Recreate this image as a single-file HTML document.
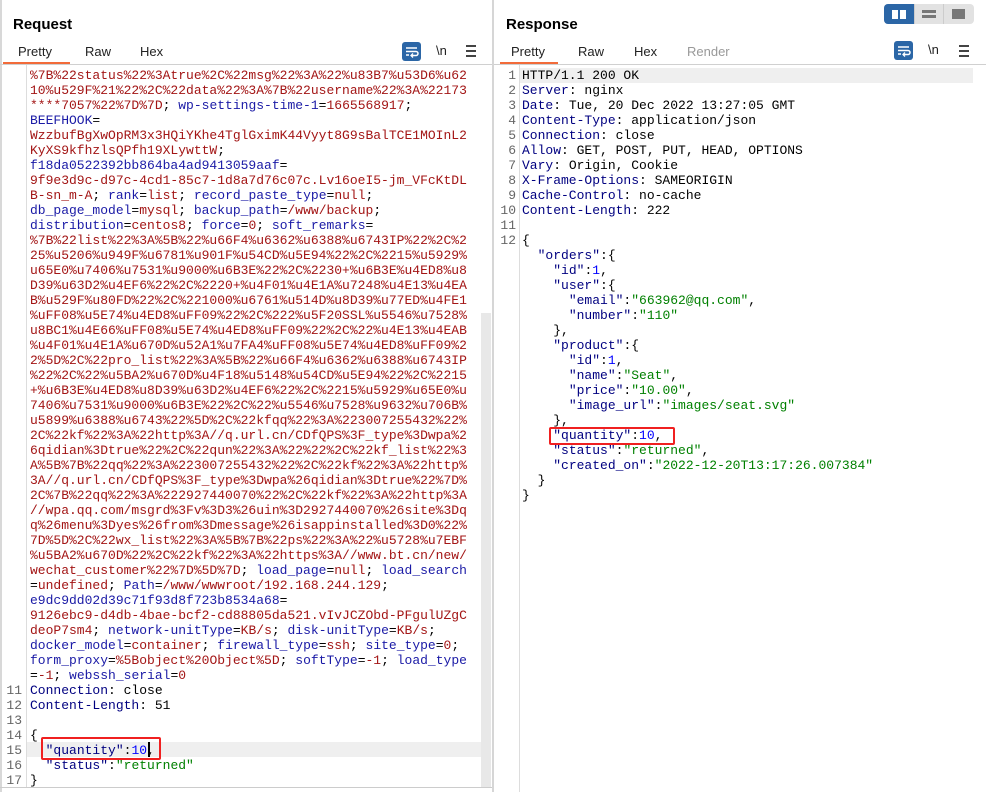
<!DOCTYPE html>
<html><head><meta charset="utf-8">
<style>
*{margin:0;padding:0;box-sizing:border-box}
html,body{width:986px;height:792px;overflow:hidden;background:#fff;font-family:"Liberation Sans",sans-serif}
.abs{position:absolute}
.title{font-weight:bold;font-size:15px;color:#000}
.tab{font-size:13px;color:#222;position:absolute;top:44px}
.code{position:absolute;font-family:"Liberation Mono",monospace;font-size:13px;line-height:15px;white-space:pre;color:#000}
.r{color:#a31515}
.b{color:#1a1aa6}
.n{color:#000080}
.k{color:#000080}
.s{color:#008000}
.num{color:#0000ff}
.ln{position:absolute;font-family:"Liberation Mono",monospace;font-size:13px;line-height:15px;color:#666;text-align:right;white-space:pre}
.wrapbtn{position:absolute;width:19px;height:19px;background:#2b66a6;border-radius:3px}
.menu{position:absolute;width:10px;height:2px;background:#444}
</style></head><body>
<div class="abs" style="left:0;top:0;width:2px;height:792px;background:#d8d8d8"></div>
<div class="abs" style="left:492px;top:0;width:2px;height:792px;background:#d6d6d6"></div>

<!-- Request header -->
<div class="abs title" style="left:13px;top:16px">Request</div>
<div class="tab" style="left:18px">Pretty</div>
<div class="tab" style="left:85px">Raw</div>
<div class="tab" style="left:140px">Hex</div>
<div class="abs" style="left:3px;top:62px;width:67px;height:3px;background:#f26b3a"></div>
<div class="abs" style="left:0;top:64px;width:492px;height:1px;background:#d0d0d0"></div>
<div class="wrapbtn" style="left:402px;top:42px"><svg width="19" height="19"><path d="M4 6h11M4 9.5h10a2 2 0 0 1 0 4h-4M4 13h3" stroke="#fff" stroke-width="1.5" fill="none"/><path d="M11 11.5l-2 2 2 2" stroke="#fff" stroke-width="1.3" fill="none"/></svg></div>
<div class="abs" style="left:436px;top:43px;font-size:13px;color:#222">\n</div>
<div class="menu" style="left:466px;top:45px"></div><div class="menu" style="left:466px;top:50px"></div><div class="menu" style="left:466px;top:55px"></div>

<!-- Request gutter -->
<div class="abs" style="left:26px;top:65px;width:1px;height:722px;background:#ddd"></div>
<div class="abs" style="left:481px;top:313px;width:10px;height:474px;background:#e8e8e8"></div>
<div class="abs" style="left:27px;top:742px;width:454px;height:15px;background:#efefef"></div>
<div class="ln" style="left:2px;top:683px;width:20px">11
12
13
14
15
16
17</div>
<div class="code" style="left:30px;top:68px"><span class="r">%7B%22status%22%3Atrue%2C%22msg%22%3A%22%u83B7%u53D6%u62
10%u529F%21%22%2C%22data%22%3A%7B%22username%22%3A%22173
****7057%22%7D%7D</span>; <span class="b">wp-settings-time-1</span>=<span class="r">1665568917</span>;
<span class="b">BEEFHOOK</span>=
<span class="r">WzzbufBgXwOpRM3x3HQiYKhe4TglGximK44Vyyt8G9sBalTCE1MOInL2
KyXS9kfhzlsQPfh19XLywttW</span>;
<span class="b">f18da0522392bb864ba4ad9413059aaf</span>=
<span class="r">9f9e3d9c-d97c-4cd1-85c7-1d8a7d76c07c.Lv16oeI5-jm_VFcKtDL
B-sn_m-A</span>; <span class="b">rank</span>=<span class="r">list</span>; <span class="b">record_paste_type</span>=<span class="r">null</span>;
<span class="b">db_page_model</span>=<span class="r">mysql</span>; <span class="b">backup_path</span>=<span class="r">/www/backup</span>;
<span class="b">distribution</span>=<span class="r">centos8</span>; <span class="b">force</span>=<span class="r">0</span>; <span class="b">soft_remarks</span>=
<span class="r">%7B%22list%22%3A%5B%22%u66F4%u6362%u6388%u6743IP%22%2C%2
25%u5206%u949F%u6781%u901F%u54CD%u5E94%22%2C%2215%u5929%
u65E0%u7406%u7531%u9000%u6B3E%22%2C%2230+%u6B3E%u4ED8%u8
D39%u63D2%u4EF6%22%2C%2220+%u4F01%u4E1A%u7248%u4E13%u4EA
B%u529F%u80FD%22%2C%221000%u6761%u514D%u8D39%u77ED%u4FE1
%uFF08%u5E74%u4ED8%uFF09%22%2C%222%u5F20SSL%u5546%u7528%
u8BC1%u4E66%uFF08%u5E74%u4ED8%uFF09%22%2C%22%u4E13%u4EAB
%u4F01%u4E1A%u670D%u52A1%u7FA4%uFF08%u5E74%u4ED8%uFF09%2
2%5D%2C%22pro_list%22%3A%5B%22%u66F4%u6362%u6388%u6743IP
%22%2C%22%u5BA2%u670D%u4F18%u5148%u54CD%u5E94%22%2C%2215
+%u6B3E%u4ED8%u8D39%u63D2%u4EF6%22%2C%2215%u5929%u65E0%u
7406%u7531%u9000%u6B3E%22%2C%22%u5546%u7528%u9632%u706B%
u5899%u6388%u6743%22%5D%2C%22kfqq%22%3A%223007255432%22%
2C%22kf%22%3A%22http%3A//q.url.cn/CDfQPS%3F_type%3Dwpa%2
6qidian%3Dtrue%22%2C%22qun%22%3A%22%22%2C%22kf_list%22%3
A%5B%7B%22qq%22%3A%223007255432%22%2C%22kf%22%3A%22http%
3A//q.url.cn/CDfQPS%3F_type%3Dwpa%26qidian%3Dtrue%22%7D%
2C%7B%22qq%22%3A%222927440070%22%2C%22kf%22%3A%22http%3A
//wpa.qq.com/msgrd%3Fv%3D3%26uin%3D2927440070%26site%3Dq
q%26menu%3Dyes%26from%3Dmessage%26isappinstalled%3D0%22%
7D%5D%2C%22wx_list%22%3A%5B%7B%22ps%22%3A%22%u5728%u7EBF
%u5BA2%u670D%22%2C%22kf%22%3A%22https%3A//www.bt.cn/new/
wechat_customer%22%7D%5D%7D</span>; <span class="b">load_page</span>=<span class="r">null</span>; <span class="b">load_search</span>
=<span class="r">undefined</span>; <span class="b">Path</span>=<span class="r">/www/wwwroot/192.168.244.129</span>;
<span class="b">e9dc9dd02d39c71f93d8f723b8534a68</span>=
<span class="r">9126ebc9-d4db-4bae-bcf2-cd88805da521.vIvJCZObd-PFgulUZgC
deoP7sm4</span>; <span class="b">network-unitType</span>=<span class="r">KB/s</span>; <span class="b">disk-unitType</span>=<span class="r">KB/s</span>;
<span class="b">docker_model</span>=<span class="r">container</span>; <span class="b">firewall_type</span>=<span class="r">ssh</span>; <span class="b">site_type</span>=<span class="r">0</span>;
<span class="b">form_proxy</span>=<span class="r">%5Bobject%20Object%5D</span>; <span class="b">softType</span>=<span class="r">-1</span>; <span class="b">load_type</span>
=<span class="r">-1</span>; <span class="b">webssh_serial</span>=<span class="r">0</span>
<span class="n">Connection</span>: close
<span class="n">Content-Length</span>: 51

{
  <span class="k">"quantity"</span>:<span class="num">10</span>,
  <span class="k">"status"</span>:<span class="s">"returned"</span>
}</div>
<div class="abs" style="left:148px;top:742px;width:2px;height:15px;background:#000"></div>
<div class="abs" style="left:41px;top:737px;width:120px;height:23px;border:2px solid #f02020;border-radius:2px"></div>
<div class="abs" style="left:0;top:787px;width:492px;height:1px;background:#ccc"></div>

<!-- Response header -->
<div class="abs title" style="left:506px;top:16px">Response</div>
<div class="tab" style="left:511px">Pretty</div>
<div class="tab" style="left:578px">Raw</div>
<div class="tab" style="left:634px">Hex</div>
<div class="tab" style="left:687px;color:#999">Render</div>
<div class="abs" style="left:500px;top:62px;width:58px;height:3px;background:#f26b3a"></div>
<div class="abs" style="left:494px;top:64px;width:492px;height:1px;background:#d0d0d0"></div>
<div class="abs" style="left:884px;top:4px;width:90px;height:20px;background:#e2e2e2;border-radius:4px;overflow:hidden">
  <div class="abs" style="left:0;top:0;width:30px;height:20px;background:#2b66a6"></div>
  <div class="abs" style="left:8px;top:6px;width:6px;height:9px;background:#fff"></div>
  <div class="abs" style="left:16px;top:6px;width:6px;height:9px;background:#fff"></div>
  <div class="abs" style="left:30px;top:0;width:1px;height:20px;background:#ccc"></div>
  <div class="abs" style="left:59px;top:0;width:1px;height:20px;background:#ccc"></div>
  <div class="abs" style="left:38px;top:6px;width:14px;height:3px;background:#777"></div>
  <div class="abs" style="left:38px;top:11px;width:14px;height:3px;background:#777"></div>
  <div class="abs" style="left:68px;top:5px;width:13px;height:10px;background:#777"></div>
</div>
<div class="wrapbtn" style="left:894px;top:41px"><svg width="19" height="19"><path d="M4 6h11M4 9.5h10a2 2 0 0 1 0 4h-4M4 13h3" stroke="#fff" stroke-width="1.5" fill="none"/><path d="M11 11.5l-2 2 2 2" stroke="#fff" stroke-width="1.3" fill="none"/></svg></div>
<div class="abs" style="left:928px;top:42px;font-size:13px;color:#222">\n</div>
<div class="menu" style="left:959px;top:45px"></div><div class="menu" style="left:959px;top:50px"></div><div class="menu" style="left:959px;top:55px"></div>

<div class="abs" style="left:519px;top:65px;width:1px;height:727px;background:#ddd"></div>
<div class="abs" style="left:520px;top:68px;width:453px;height:15px;background:#efefef"></div>
<div class="ln" style="left:494px;top:68px;width:22px">1
2
3
4
5
6
7
8
9
10
11
12</div>
<div class="code" style="left:522px;top:68px">HTTP/1.1 200 OK
<span class="n">Server</span>: nginx
<span class="n">Date</span>: Tue, 20 Dec 2022 13:27:05 GMT
<span class="n">Content-Type</span>: application/json
<span class="n">Connection</span>: close
<span class="n">Allow</span>: GET, POST, PUT, HEAD, OPTIONS
<span class="n">Vary</span>: Origin, Cookie
<span class="n">X-Frame-Options</span>: SAMEORIGIN
<span class="n">Cache-Control</span>: no-cache
<span class="n">Content-Length</span>: 222

{
  <span class="k">"orders"</span>:{
    <span class="k">"id"</span>:<span class="num">1</span>,
    <span class="k">"user"</span>:{
      <span class="k">"email"</span>:<span class="s">"663962@qq.com"</span>,
      <span class="k">"number"</span>:<span class="s">"110"</span>
    },
    <span class="k">"product"</span>:{
      <span class="k">"id"</span>:<span class="num">1</span>,
      <span class="k">"name"</span>:<span class="s">"Seat"</span>,
      <span class="k">"price"</span>:<span class="s">"10.00"</span>,
      <span class="k">"image_url"</span>:<span class="s">"images/seat.svg"</span>
    },
    <span class="k">"quantity"</span>:<span class="num">10</span>,
    <span class="k">"status"</span>:<span class="s">"returned"</span>,
    <span class="k">"created_on"</span>:<span class="s">"2022-12-20T13:17:26.007384"</span>
  }
}</div>
<div class="abs" style="left:549px;top:427px;width:126px;height:18px;border:2px solid #f02020;border-radius:2px"></div>
</body></html>
